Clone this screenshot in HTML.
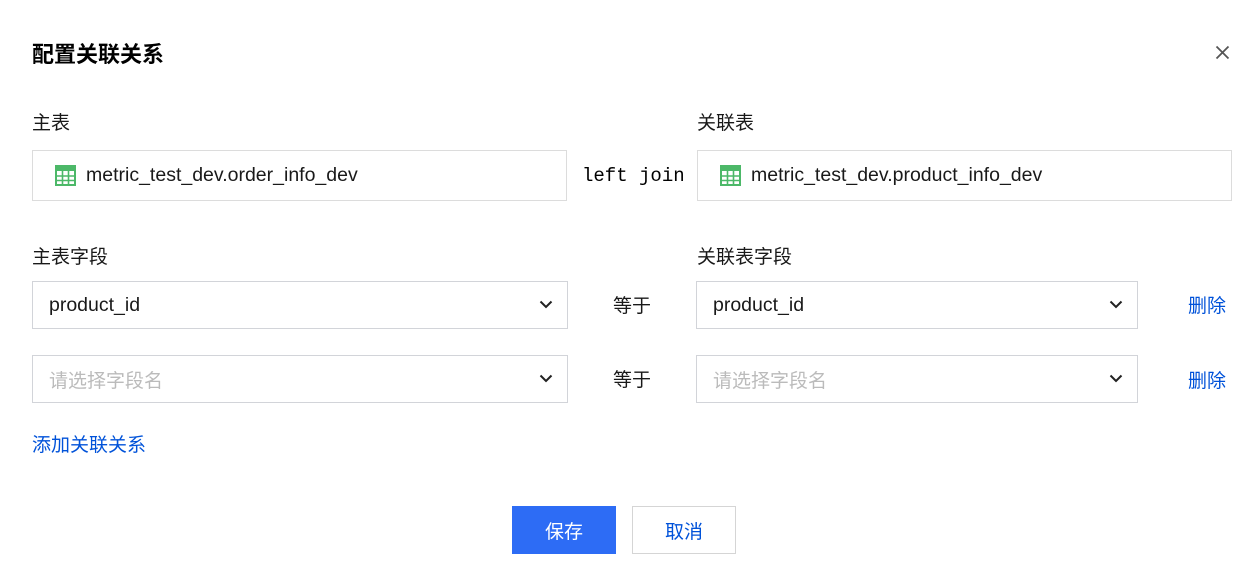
<!DOCTYPE html><html><head><meta charset="utf-8"><style>
body{margin:0;width:1252px;height:564px;background:#fff;font-family:"Liberation Sans","Noto Sans CJK SC",sans-serif;color:#000;position:relative;overflow:hidden}
.a{position:absolute}
.t{color:rgba(0,0,0,.9);font-size:19px}
.box{position:absolute;border:1px solid #dcdcdc;box-sizing:border-box;font-size:19.5px;display:flex;align-items:center;color:rgba(0,0,0,.9)}
.sel{border-color:#d2d4d9;padding-left:16px}
.ph{color:#bbb;font-size:19px}
.chev{position:absolute;right:14px;top:50%;margin-top:-5px}
.del{color:#0052d9;font-size:19px}
</style></head><body>
<div class="a" style="left:32px;top:37px;font-size:22px;font-weight:bold">配置关联关系</div>
<svg class="a" style="left:1215px;top:45px" width="15" height="15" viewBox="0 0 15 15"><path d="M1.5 1.5L13.5 13.5M13.5 1.5L1.5 13.5" stroke="#555" stroke-width="1.8"/></svg>
<div class="a t" style="left:32px;top:108px">主表</div>
<div class="a t" style="left:697px;top:108px">关联表</div>
<div class="box" style="left:32px;top:150px;width:535px;height:51px;padding-left:22px"><svg width="21" height="21" viewBox="0 0 21 21" style="margin-right:10px"><rect x="1" y="1" width="19" height="19" fill="none" stroke="#4cb868" stroke-width="2"/><rect x="1" y="1" width="19" height="5" fill="#4cb868"/><path d="M7.5 6V20M13.5 6V20M1 11H20M1 15.5H20" stroke="#4cb868" stroke-width="1.6"/></svg>metric_test_dev.order_info_dev</div>
<div class="a" style="left:582px;top:165px;font-family:'Liberation Mono',monospace;font-size:19px">left join</div>
<div class="box" style="left:697px;top:150px;width:535px;height:51px;padding-left:22px"><svg width="21" height="21" viewBox="0 0 21 21" style="margin-right:10px"><rect x="1" y="1" width="19" height="19" fill="none" stroke="#4cb868" stroke-width="2"/><rect x="1" y="1" width="19" height="5" fill="#4cb868"/><path d="M7.5 6V20M13.5 6V20M1 11H20M1 15.5H20" stroke="#4cb868" stroke-width="1.6"/></svg>metric_test_dev.product_info_dev</div>
<div class="a t" style="left:32px;top:242px">主表字段</div>
<div class="a t" style="left:697px;top:242px">关联表字段</div>

<div class="box sel" style="left:32px;top:281px;width:536px;height:48px">product_id<svg class="chev" width="14" height="9" viewBox="0 0 14 9"><path d="M1.5 1.5L7 7L12.5 1.5" fill="none" stroke="#222" stroke-width="2"/></svg></div>
<div class="a t" style="left:613px;top:291px">等于</div>
<div class="box sel" style="left:696px;top:281px;width:442px;height:48px">product_id<svg class="chev" width="14" height="9" viewBox="0 0 14 9"><path d="M1.5 1.5L7 7L12.5 1.5" fill="none" stroke="#222" stroke-width="2"/></svg></div>
<div class="a del" style="left:1188px;top:291px">删除</div>

<div class="box sel ph" style="left:32px;top:355px;width:536px;height:48px">请选择字段名<svg class="chev" width="14" height="9" viewBox="0 0 14 9"><path d="M1.5 1.5L7 7L12.5 1.5" fill="none" stroke="#222" stroke-width="2"/></svg></div>
<div class="a t" style="left:613px;top:365px">等于</div>
<div class="box sel ph" style="left:696px;top:355px;width:442px;height:48px">请选择字段名<svg class="chev" width="14" height="9" viewBox="0 0 14 9"><path d="M1.5 1.5L7 7L12.5 1.5" fill="none" stroke="#222" stroke-width="2"/></svg></div>
<div class="a del" style="left:1188px;top:366px">删除</div>

<div class="a del" style="left:32px;top:430px">添加关联关系</div>
<div class="a" style="left:512px;top:506px;width:104px;height:48px;background:#2d6cf5;color:#fff;font-size:19px;display:flex;align-items:center;justify-content:center">保存</div>
<div class="a" style="left:632px;top:506px;width:104px;height:48px;border:1px solid #d5d5d5;box-sizing:border-box;color:#0052d9;font-size:19px;display:flex;align-items:center;justify-content:center">取消</div>
</body></html>
